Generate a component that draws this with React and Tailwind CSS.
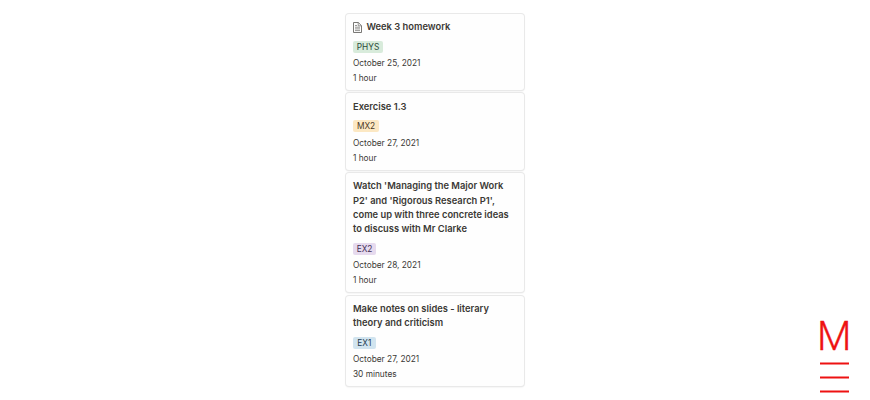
const tasks = [
  {
    lines: ['Week 3 homework'],
    hasPage: true,
    subject: 'PHYS',
    tag: 'bg-[#d8ebdb] text-[#2a4a38] w-[30px]',
    date: 'October 25, 2021',
    duration: '1 hour',
  },
  {
    lines: ['Exercise 1.3'],
    subject: 'MX2',
    tag: 'bg-[#fce8c3] text-[#4b3826] w-[26px]',
    date: 'October 27, 2021',
    duration: '1 hour',
  },
  {
    lines: [
      "Watch 'Managing the Major Work",
      "P2' and 'Rigorous Research P1',",
      'come up with three concrete ideas',
      'to discuss with Mr Clarke',
    ],
    subject: 'EX2',
    tag: 'bg-[#e6daee] text-[#443056] w-[23px]',
    date: 'October 28, 2021',
    duration: '1 hour',
  },
  {
    lines: ['Make notes on slides - literary', 'theory and criticism'],
    subject: 'EX1',
    tag: 'bg-[#d1e4ef] text-[#243c50] w-[22.5px]',
    date: 'October 27, 2021',
    duration: '30 minutes',
  },
];

function PageIcon() {
  return (
    <svg viewBox="0 0 9 11" className="mr-[4.5px] mb-px h-[11px] w-[9px] shrink-0" fill="none" stroke="#6b6a67" strokeWidth="0.9">
      <path d="M.5.5h4.8l3.2 3.2v6.8h-8z" />
      <path d="M5.2.5v3.3h3.3M2 3.5h2M2 5.2h5M2 6.9h5M2 8.6h5" strokeWidth="0.7" />
    </svg>
  );
}

function TaskCard({ task }) {
  return (
    <article className="rounded-[3px] bg-[#fefefe] px-[7px] pt-[6.3px] pb-[3.8px] shadow-[0_0_0_1px_#e9e9e9,0_1px_2px_#00000020]">
      <h2 className="flex items-center text-[9.36px] leading-[14.4px] font-semibold text-[#3b3935]">
        {task.hasPage && <PageIcon />}
        <span>
          {task.lines.map((line) => (
            <span key={line} className="block whitespace-nowrap">
              {line}
            </span>
          ))}
        </span>
      </h2>
      <div className={`mt-[6.3px] flex h-3 items-center justify-center rounded-[2px] text-[8.3px] leading-3 ${task.tag}`}>
        {task.subject}
      </div>
      <p className="mt-[3.3px] text-[8.3px] leading-[15px] text-[#3b3935]">{task.date}</p>
      <p className="text-[8.3px] leading-[15px] text-[#3b3935]">{task.duration}</p>
    </article>
  );
}

function Logo() {
  return (
    <svg viewBox="0 0 34 80" className="h-20 w-[34px] overflow-visible" fill="#ee1212">
      <text
        x="-1"
        y="30.4"
        textLength="34.4"
        lengthAdjust="spacingAndGlyphs"
        strokeWidth="0.4"
        stroke="#ee1212"
        className="font-['Roboto'] text-[41.5px] leading-none font-light"
      >
        M
      </text>
      <path d="M2 42.4h29v2H2zM2 56.5h29v2H2zM2 70.4h29v2H2z" />
    </svg>
  );
}

export default function App() {
  return (
    <main className="grid h-[400px] w-[870px] grid-cols-[1fr_178px_1fr] bg-white font-['Inter',sans-serif]">
      <section className="col-start-2 flex flex-col gap-[3.4px] pt-[14px]">
        {tasks.map((task) => (
          <TaskCard key={task.lines[0]} task={task} />
        ))}
      </section>
      <aside className="flex items-end justify-end pr-[18px]">
        <Logo />
      </aside>
    </main>
  );
}
